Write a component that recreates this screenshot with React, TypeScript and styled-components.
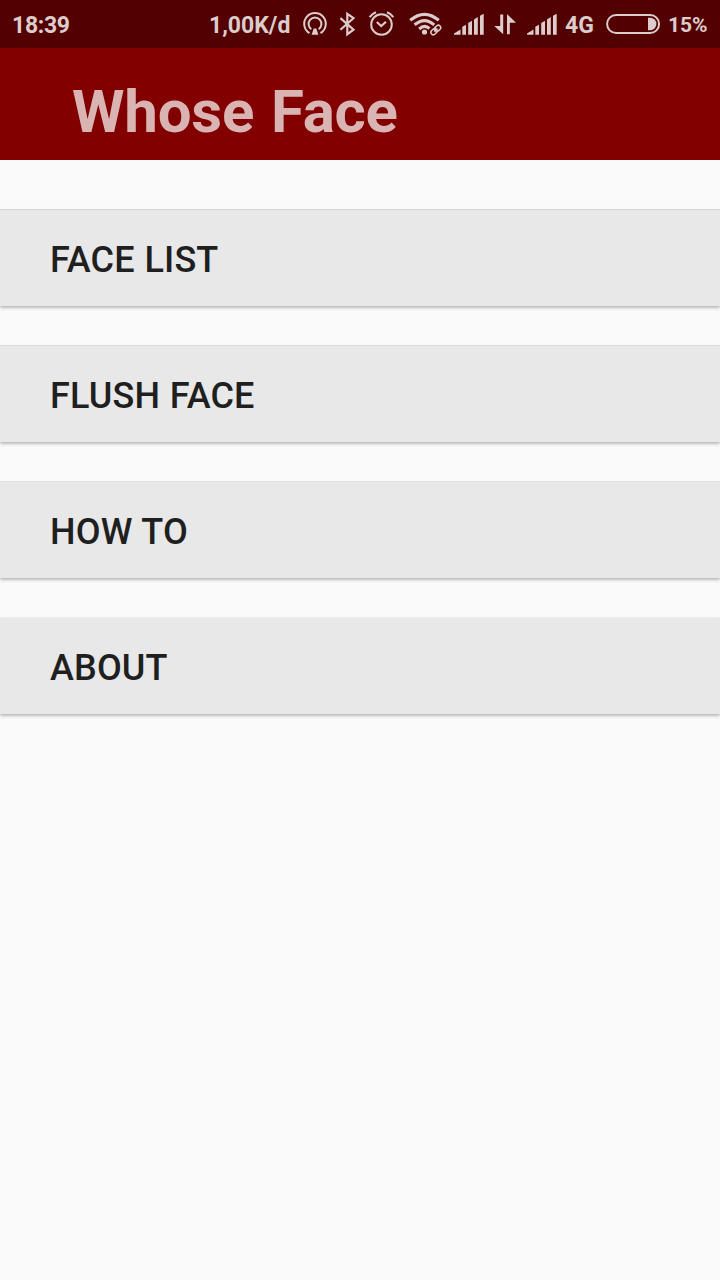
import React from "react";
import styled, { createGlobalStyle } from "styled-components";

const GlobalStyle = createGlobalStyle`
  body {
    margin: 0;
    background: #fafafa;
    font-family: Roboto, "Liberation Sans", sans-serif;
  }
`;

const Screen = styled.div`
  min-height: 1280px;
  background: #fafafa;
  overflow: hidden;
`;

const StatusBar = styled.div`
  display: flex;
  align-items: center;
  height: 48px;
  background: #520000;
  color: #dccccc;
`;

const StatusText = styled.span<{ $left: number; $width: number; $small?: boolean; $tracking?: number }>`
  flex: none;
  margin-left: ${(p) => p.$left}px;
  width: ${(p) => p.$width}px;
  font-size: ${(p) => (p.$small ? 21 : 23)}px;
  letter-spacing: ${(p) => p.$tracking ?? 0}px;
  line-height: 28px;
  padding-top: ${(p) => (p.$small ? 2 : 4)}px;
  font-weight: 700;
  white-space: nowrap;
`;

const StatusIcon = styled.svg<{ $left: number }>`
  flex: none;
  display: block;
  margin-left: ${(p) => p.$left}px;
  fill: none;
  stroke: currentColor;
`;

const Header = styled.header`
  height: 112px;
  box-sizing: border-box;
  padding: 29px 0 0 72px;
  background: #820000;
`;

const Title = styled.h1`
  margin: 0;
  color: #dab3b3;
  font-size: 60px;
  line-height: 70px;
  font-weight: 700;
  letter-spacing: -0.2px;
  word-spacing: 2px;
`;

const Menu = styled.nav`
  display: flex;
  flex-direction: column;
  gap: 40px;
  padding-top: 50px;
`;

const MenuButton = styled.button<{ $edge: number }>`
  height: 96px;
  padding: 4px 0 0 50px;
  border: 0;
  background: #e8e8e8;
  color: #1f1f1f;
  font: 500 36px/42px Roboto, "Liberation Sans", sans-serif;
  letter-spacing: 0.15px;
  word-spacing: 0.6px;
  text-align: left;
  box-shadow:
    0 -1px 0 rgba(0, 0, 0, ${(p) => p.$edge}),
    0 0 2px rgba(0, 0, 0, 0.08),
    0 2px 3px rgba(0, 0, 0, 0.25);
`;

const items = [
  { label: "FACE LIST", edge: 0.12 },
  { label: "FLUSH FACE", edge: 0.09 },
  { label: "HOW TO", edge: 0.06 },
  { label: "ABOUT", edge: 0.02 },
];

const Signal = ({ left }: { left: number }) => (
  <StatusIcon $left={left} width="30" height="48" viewBox="0 0 30 48">
    <path
      fill="currentColor"
      stroke="none"
      d="M0 34.7V33.6L6.5 29.6V34.7ZM8.3 34.7V26.8L12 24.7V34.7ZM14.2 34.7V23.1L18 20.8V34.7ZM20 34.7V19.4L23.8 17.1V34.7ZM26 34.7V15.8L29.7 13.8V34.7Z"
    />
  </StatusIcon>
);

export default function App() {
  return (
    <Screen>
      <GlobalStyle />
      <StatusBar>
        <StatusText $left={12} $width={60} $tracking={-0.3}>18:39</StatusText>
        <StatusText $left={137} $width={83}>1,00K/d</StatusText>
        <StatusIcon $left={10} width="26" height="48" viewBox="302 0 26 48" strokeWidth="2">
          <path d="M309.5 33.1A10.8 10.8 0 1 1 320.5 33.1" />
          <path d="M311.4 29.2A6.4 6.4 0 1 1 318.6 29.2" />
          <path fill="currentColor" stroke="none" d="M313.7 28.6H316.3L318.4 34.8H311.6Z" />
        </StatusIcon>
        <StatusIcon $left={10} width="20" height="48" viewBox="338 0 20 48" strokeWidth="2.2">
          <path d="M340.4 18.2L353.5 29.6L347.3 34.2V13.8L353.5 18.2L340.4 29.8" />
        </StatusIcon>
        <StatusIcon $left={10} width="28" height="48" viewBox="368 0 28 48" strokeWidth="2">
          <circle cx="381.5" cy="24.5" r="10.3" />
          <path strokeWidth="2.2" d="M376.8 22L381.2 26L386 21.7M369.7 17.2Q372 13.7 376 12.3M393.3 17.2Q391 13.7 387 12.3" />
        </StatusIcon>
        <StatusIcon $left={12} width="36" height="48" viewBox="408 0 36 48">
          <g strokeWidth="3.1">
            <path d="M410.2 20.3Q424.5 8.3 438.8 20.3" />
            <path d="M414.6 24.8Q424.5 16.3 434.2 24.8" />
            <path d="M419.2 29Q424.5 24 429.5 28.5" />
          </g>
          <circle cx="424.5" cy="32" r="2.6" fill="currentColor" stroke="none" />
          <g strokeWidth="1.5" transform="rotate(-43 435.8 30)">
            <rect x="430" y="27.6" width="6.6" height="4.8" rx="2.4" />
            <rect x="435" y="27.6" width="6.6" height="4.8" rx="2.4" />
            <path d="M433.5 30H438.1" />
          </g>
        </StatusIcon>
        <Signal left={10} />
        <StatusIcon $left={10} width="23" height="48" viewBox="494 0 23 48">
          <path fill="currentColor" stroke="none" d="M500.2 14.5H503.2V34.2L494.2 26H500.2ZM507 14V34.2H509.8V22.7H516Z" />
        </StatusIcon>
        <Signal left={10} />
        <StatusText $left={8} $width={31}>4G</StatusText>
        <StatusIcon $left={10} width="56" height="48" viewBox="606 0 56 48">
          <rect x="607.1" y="15" width="52" height="18" rx="9" strokeWidth="2" />
          <path fill="currentColor" stroke="none" d="M648 17.8H650.2A6.2 6.2 0 0 1 650.2 30.2H648Z" />
        </StatusIcon>
        <StatusText $left={6} $width={42} $small>15%</StatusText>
      </StatusBar>
      <Header>
        <Title>Whose Face</Title>
      </Header>
      <Menu>
        {items.map((item) => (
          <MenuButton key={item.label} $edge={item.edge}>
            {item.label}
          </MenuButton>
        ))}
      </Menu>
    </Screen>
  );
}
